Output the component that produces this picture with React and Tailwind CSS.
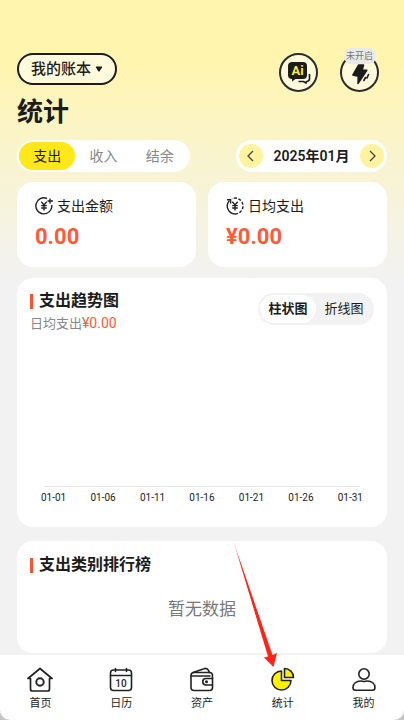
import { useState } from 'react';

const TABS = ['支出', '收入', '结余'];
const CHART_TYPES = ['柱状图', '折线图'];
const DAYS = ['01-01', '01-06', '01-11', '01-16', '01-21', '01-26', '01-31'];

const AiIcon = () => (
  <svg className="h-6 w-6 shrink-0" viewBox="0 0 24 24" fill="none">
    <path
      d="M4.500 1h11.500a4 4 0 0 1 4 4v9a4 4 0 0 1-4 4H8.500L5 20.500V18a4 4 0 0 1-4-4V5a4 4 0 0 1 3.500-4z"
      fill="#1c1c1c"
    />
    <path d="M22.500 13v4.500a3 3 0 0 1-3 3l-.5 1.500-2.500-1.500H11.500" stroke="#1c1c1c" strokeWidth="1.600" />
    <text x="10.500" y="14" textAnchor="middle" className="font-bold" fontSize="13" fill="#fbe64b">
      Ai
    </text>
  </svg>
);

const BoltIcon = () => (
  <svg className="h-6 w-6 shrink-0" viewBox="0 0 24 24" fill="#1c1c1c">
    <path
      d="M10.500 4h5l-1.300 5.300h4.600L10 22.500l.2-7.200L4.800 14z"
      stroke="#1c1c1c"
      strokeWidth="1.500"
      strokeLinejoin="round"
    />
    <path d="M20.500 13.500l-1.500 3.500M17.500 16.500l-1.700 3" stroke="#1c1c1c" strokeWidth="1.600" strokeLinecap="round" />
  </svg>
);

const AmountIcon = () => (
  <svg className="h-[18px] w-[18px]" viewBox="0 0 18 18" fill="none" stroke="#222" strokeWidth="1.4">
    <path d="M12 1.5A8 8 0 1 0 16.8 8" />
    <path d="M15 1.5v5M12.5 4H18" />
    <path d="M6.3 4.8L9 8l2.7-3.2M9 8v5.5M6.2 8.6h5.6M6.2 11h5.6" />
  </svg>
);

const AverageIcon = () => (
  <svg className="h-[18px] w-[18px]" viewBox="0 0 18 18" fill="none" stroke="#222" strokeWidth="1.4">
    <path d="M3.4 3.6A8 8 0 0 0 9 17" />
    <path d="M9 17a8 8 0 0 0 8-8 8 8 0 0 0-11-7.4" strokeDasharray="3 1.6" />
    <path d="M1 2.8h3.6v3.6" />
    <path d="M6.3 4.8L9 8l2.7-3.2M9 8v5.5M6.2 8.6h5.6M6.2 11h5.6" />
  </svg>
);

const HomeIcon = () => (
  <svg className="h-[26px] w-[26px]" viewBox="0 0 26 26" fill="none" stroke="#222" strokeWidth="1.7" strokeLinecap="round" strokeLinejoin="round">
    <path d="M3.5 11.5H1L13 1.5l12 10h-2.5v10.5a2 2 0 0 1-2 2h-15a2 2 0 0 1-2-2z" />
    <circle cx="13" cy="15" r="3.7" strokeWidth="1.9" />
  </svg>
);

const CalendarIcon = () => (
  <svg className="h-[26px] w-[26px]" viewBox="0 0 26 26" fill="none" stroke="#222" strokeWidth="1.6" strokeLinecap="round">
    <rect x="2.500" y="3" width="21" height="20.500" rx="3" />
    <path d="M2.500 8.500h21M7.500 1.500v3M18.500 1.500v3" />
    <text x="13" y="19.500" textAnchor="middle" className="font-medium" fontSize="10" fill="#222" stroke="none">
      10
    </text>
  </svg>
);

const WalletIcon = () => (
  <svg className="h-[26px] w-[26px]" viewBox="0 0 26 26" fill="none" stroke="#222" strokeWidth="1.6" strokeLinecap="round" strokeLinejoin="round">
    <rect x="2" y="5.500" width="21.500" height="18" rx="3" />
    <path d="M4 5.500L15 1.700q2.500-1 4 1L20.500 5.500M2 9h19" />
    <path d="M23.500 11.500H17a3.200 3.200 0 0 0 0 6.500h6.500" />
    <circle cx="17.500" cy="14.700" r="0.700" fill="#222" />
  </svg>
);

const PieIcon = () => (
  <svg className="h-[26px] w-[26px]" viewBox="0 0 26 26" fill="#fff200" stroke="#222" strokeWidth="1.6" strokeLinejoin="round">
    <path d="M11.500 4A9.500 9.500 0 1 0 21 13.500h-9.500z" />
    <path d="M14.500 1.500v9h9A9 9 0 0 0 14.500 1.500z" />
  </svg>
);

const UserIcon = () => (
  <svg className="h-[26px] w-[26px]" viewBox="0 0 26 26" fill="none" stroke="#222" strokeWidth="1.6">
    <circle cx="13" cy="7" r="5.200" />
    <path d="M2 20.500c0-4 3.500-6.500 7.500-6.500 2 0 2 .5 3.500.5s1.500-.5 3.500-.5c4 0 7.500 2.500 7.500 6.500 0 2-1 2.700-2.500 2.700h-17C3 23.200 2 22.500 2 20.500z" />
  </svg>
);

const Chevron = ({ d }) => (
  <svg className="h-3 w-3" viewBox="0 0 12 12" fill="none" stroke="#444" strokeWidth="1.3">
    <path d={d} />
  </svg>
);

// Red pointer that ends on the statistics entry of the bottom bar
const Pointer = () => (
  <svg
    className="pointer-events-none absolute right-1/2 bottom-[45px] mr-[6px] h-[128px] w-[48px]"
    viewBox="0 0 48 128"
  >
    <defs>
      <linearGradient id="pointer" x1="0" y1="0" x2="0" y2="1">
        <stop offset="0" stopColor="#ff2416" stopOpacity="0.3" />
        <stop offset="0.2" stopColor="#ff2416" />
      </linearGradient>
    </defs>
    <path d="M4 1L43.500 116l4.500-2-3.500 14-9.500-9.500 4-1z" fill="url(#pointer)" />
  </svg>
);

const NAV_ITEMS = [
  { label: '首页', Icon: HomeIcon },
  { label: '日历', Icon: CalendarIcon },
  { label: '资产', Icon: WalletIcon },
  { label: '统计', Icon: PieIcon, active: true },
  { label: '我的', Icon: UserIcon },
];

const StatCard = ({ icon, label, value }) => (
  <div className="rounded-2xl bg-white px-[18px] pt-[14px] pb-4">
    <div className="flex items-center gap-1 text-sm leading-5">
      {icon}
      <span>{label}</span>
    </div>
    <p className="mt-[7px] text-[22px] leading-7 font-bold text-[#ff5a38]">{value}</p>
  </div>
);

const SectionTitle = ({ children }) => (
  <h2 className="flex items-center gap-[6px] text-base leading-6 font-bold">
    <span className="h-[15px] w-[3px] bg-[#ff5233]" />
    {children}
  </h2>
);

const App = () => {
  const [tab, setTab] = useState('支出');
  const [chartType, setChartType] = useState('柱状图');

  return (
    <div className="flex min-h-screen flex-col bg-[#f2f2f2] bg-linear-to-b from-[#fff5ae] from-[60px] to-[#f2f2f2] to-[280px] font-[Roboto,'Noto_Sans_CJK_SC',sans-serif] text-[#1c1c1c]">
      <main className="flex-1 px-[17px] pt-[53px]">
        <header className="flex items-start justify-between">
          <div>
            <button className="flex h-8 items-center gap-1 rounded-full border-2 border-[#1c1c1c] bg-[#fffadc] px-3 text-[15px] font-medium">
              我的账本
              <svg className="h-2 w-2" viewBox="0 0 8 8" fill="#1c1c1c">
                <path d="M1.500 1.500h5q1 0 .5 1L4.700 6.300q-.7.700-1.400 0L1 2.500q-.5-1 .5-1z" />
              </svg>
            </button>
            <h1 className="mt-[11px] text-[26px] leading-8 font-bold">统计</h1>
          </div>
          <div className="flex gap-[22px] pr-2">
            <button
              aria-label="AI"
              className="flex h-[39px] w-[39px] items-center justify-center rounded-full border-2 border-[#2c2c2c] bg-[#fffadc]"
            >
              <AiIcon />
            </button>
            <button className="relative flex h-[39px] w-[39px] items-center justify-center rounded-full border-2 border-[#2c2c2c] bg-[#fffadc]">
              <BoltIcon />
              <span className="absolute -top-[7px] left-1/2 -translate-x-1/2 rounded-md bg-[#e9e9e9] px-[2px] text-[9px] leading-4 whitespace-nowrap text-[#777]">
                未开启
              </span>
            </button>
          </div>
        </header>

        <div className="mt-3 flex items-center justify-between">
          <div className="grid h-8 w-[173px] grid-cols-3 rounded-full bg-white p-[2px] text-sm">
            {TABS.map((name) => (
              <button
                key={name}
                onClick={() => setTab(name)}
                className={`rounded-full ${tab === name ? 'bg-[#ffe81a]' : 'text-[#888]'}`}
              >
                {name}
              </button>
            ))}
          </div>
          <div className="flex h-8 w-[151px] items-center justify-between rounded-full bg-white px-[3px]">
            <button aria-label="上个月" className="flex h-6 w-6 items-center justify-center rounded-full bg-[#fff3a0]">
              <Chevron d="M8 1L3 6l5 5" />
            </button>
            <span className="text-sm font-semibold">2025年01月</span>
            <button aria-label="下个月" className="flex h-6 w-6 items-center justify-center rounded-full bg-[#fff3a0]">
              <Chevron d="M4 1l5 5-5 5" />
            </button>
          </div>
        </div>

        <div className="mt-[10px] grid grid-cols-2 gap-3">
          <StatCard icon={<AmountIcon />} label="支出金额" value="0.00" />
          <StatCard icon={<AverageIcon />} label="日均支出" value="¥0.00" />
        </div>

        <section className="mt-[11px] rounded-2xl bg-white px-[13px] pt-[11px] pb-5">
          <div className="flex items-start justify-between">
            <div>
              <SectionTitle>支出趋势图</SectionTitle>
              <p className="text-[13px] leading-5 text-[#888]">
                日均支出<span className="text-sm leading-5 text-[#ff5a38]">¥0.00</span>
              </p>
            </div>
            <div className="mt-1 grid h-8 w-[116px] grid-cols-2 rounded-full bg-[#f2f2f2] p-[2px] text-[13px]">
              {CHART_TYPES.map((name) => (
                <button
                  key={name}
                  onClick={() => setChartType(name)}
                  className={`rounded-full ${chartType === name ? 'bg-white font-bold' : ''}`}
                >
                  {name}
                </button>
              ))}
            </div>
          </div>
          {/* no records this month, only the axis is left */}
          <div className="mx-[14px] h-[153px] border-b border-[#e2e2e2]" />
          <div className="mt-[2px] flex justify-between px-[11px] text-[10px] leading-[18px]">
            {DAYS.map((day) => (
              <span key={day}>{day}</span>
            ))}
          </div>
        </section>

        <section className="mt-[14px] rounded-2xl bg-white px-[13px] pt-3 pb-8">
          <SectionTitle>支出类别排行榜</SectionTitle>
          <p className="mt-5 text-center text-[17px] leading-6 text-[#777]">暂无数据</p>
        </section>
      </main>

      <footer className="sticky bottom-0 bg-[#c4c4c4]">
        <nav className="grid grid-cols-5 rounded-b-[10px] border-t border-[#f2f2f2] bg-white pt-3 pb-2">
          {NAV_ITEMS.map(({ label, Icon, active }) => (
            <a key={label} href="#" className="relative flex flex-col items-center gap-[3px] text-[11px] leading-4">
              <Icon />
              {label}
              {active && <Pointer />}
            </a>
          ))}
        </nav>
      </footer>
    </div>
  );
};

export default App;
